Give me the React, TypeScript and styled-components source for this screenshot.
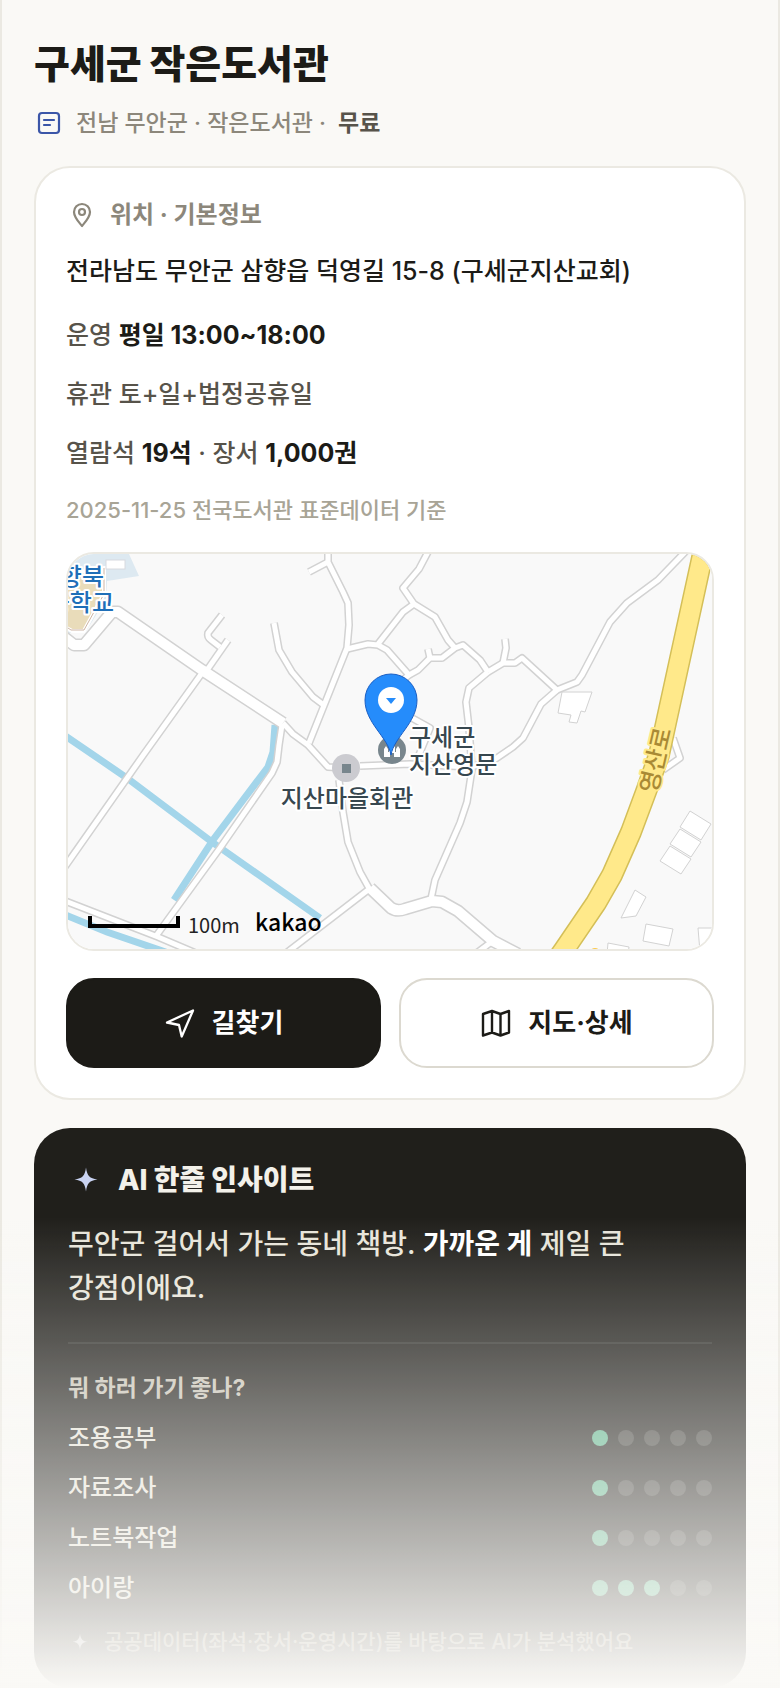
import React from "react"
import styled, { createGlobalStyle } from "styled-components"

const tokens = {
  font: `Inter, "Noto Sans CJK KR", sans-serif`,
  fontMap: `"Noto Sans CJK KR", sans-serif`,
  colors: {
    page: "#faf9f6",
    line: "#ebe9e2",
    lineStrong: "#dcd9d0",
    ink: "#1c1b17",
    text: "#57534a",
    muted: "#8c877b",
    faint: "#a8a496",
    dark: "#201f1b",
    mint: "#5cb38b",
    indigo: "#3b56a8",
  },
}

const GlobalStyle = createGlobalStyle`
  *, *::before, *::after {
    box-sizing: border-box;
  }

  body {
    margin: 0;
    background: ${tokens.colors.page};
    color: ${tokens.colors.ink};
    font-family: ${tokens.font};
    font-weight: 500;
    word-break: keep-all;
  }

  h1, h2, h3, p, ul {
    margin: 0;
    padding: 0;
  }

  svg {
    display: block;
    flex-shrink: 0;
  }
`

const Page = styled.main`
  min-height: 100vh;
  padding: 40px 32px 0;
  border: solid ${tokens.colors.line};
  border-width: 0 2px;
`

const Title = styled.h1`
  font-size: 39px;
  font-weight: 900;
  line-height: 48px;
`

const Meta = styled.p`
  display: flex;
  align-items: center;
  gap: 12px;
  margin-top: 16px;
  font-size: 23px;
  line-height: 38px;
  color: ${tokens.colors.muted};

  b {
    font-weight: 700;
    color: ${tokens.colors.text};
  }
`

const InfoCard = styled.section`
  margin-top: 24px;
  padding: 30px;
  background: #fff;
  border: 2px solid ${tokens.colors.line};
  border-radius: 36px;
`

const InfoHeading = styled.h2`
  display: flex;
  align-items: center;
  gap: 12px;
  font-size: 24px;
  font-weight: 700;
  line-height: 34px;
  color: ${tokens.colors.muted};
`

const Address = styled.p`
  margin-top: 20px;
  font-size: 25px;
  line-height: 38px;
`

const Facts = styled.ul`
  display: grid;
  gap: 21px;
  margin-top: 26px;
  list-style: none;
  font-size: 25px;
  line-height: 38px;
  color: ${tokens.colors.text};

  b {
    font-weight: 700;
    color: ${tokens.colors.ink};
  }
`

const Source = styled.p`
  margin-top: 20px;
  font-size: 22px;
  line-height: 36px;
  color: ${tokens.colors.faint};
`

const MapFrame = styled.div`
  margin-top: 24px;
  overflow: hidden;
  border: 2px solid ${tokens.colors.line};
  border-radius: 28px;

  svg {
    width: 100%;
    height: auto;
  }
`

const Actions = styled.div`
  display: grid;
  grid-template-columns: 1fr 1fr;
  gap: 18px;
  margin-top: 27px;
`

const ActionButton = styled.button<{ $primary?: boolean }>`
  display: flex;
  align-items: center;
  justify-content: center;
  gap: 16px;
  height: 90px;
  border: 2px solid
    ${props => (props.$primary ? tokens.colors.ink : tokens.colors.lineStrong)};
  border-radius: 28px;
  background: ${props => (props.$primary ? tokens.colors.ink : "#fff")};
  color: ${props => (props.$primary ? "#fff" : tokens.colors.ink)};
  font-family: inherit;
  font-size: 26px;
  font-weight: 700;
  line-height: 34px;
  cursor: pointer;
`

const InsightCard = styled.section`
  margin-top: 28px;
  padding: 34px 34px 30px;
  background: ${tokens.colors.dark};
  border-radius: 36px;
`

const InsightHeading = styled.h2`
  display: flex;
  align-items: center;
  gap: 14px;
  font-size: 28px;
  font-weight: 800;
  line-height: 36px;
  color: #f3f1ea;
`

const Summary = styled.p`
  margin-top: 24px;
  font-size: 28px;
  line-height: 44px;
  color: #e8e5da;

  b {
    font-weight: 700;
    color: #fff;
  }
`

const Purposes = styled.div`
  margin-top: 32px;
  padding-top: 28px;
  border-top: 2px solid rgba(255, 255, 255, 0.08);
`

const PurposesTitle = styled.h3`
  font-size: 23px;
  font-weight: 700;
  line-height: 32px;
  color: #c6c2b5;
`

const PurposeList = styled.ul`
  display: grid;
  gap: 16px;
  margin-top: 17px;
  list-style: none;
`

const Purpose = styled.li`
  display: flex;
  align-items: center;
  justify-content: space-between;
  font-size: 24px;
  line-height: 34px;
  color: #e6e3d8;
`

const Dots = styled.span`
  display: flex;
  gap: 10px;
`

const Dot = styled.span<{ $on: boolean }>`
  width: 16px;
  height: 16px;
  border-radius: 50%;
  background: ${props =>
    props.$on ? tokens.colors.mint : "rgba(255, 255, 255, 0.15)"};
`

const Footnote = styled.p`
  display: flex;
  align-items: center;
  gap: 12px;
  margin-top: 21px;
  font-size: 21px;
  line-height: 32px;
  color: #8f8a7c;
`

const Fade = styled.div`
  position: fixed;
  inset: auto 0 0;
  height: 28vh;
  background: linear-gradient(rgba(250, 249, 246, 0), ${tokens.colors.page});
  pointer-events: none;
`

const MapLabel = styled.text`
  font-family: ${tokens.fontMap};
  font-size: 24px;
  font-weight: 500;
  fill: #37474f;
  stroke: #fff;
  stroke-width: 4px;
  stroke-linejoin: round;
  paint-order: stroke;
`

const SchoolLabel = styled(MapLabel)`
  fill: #1f6fb8;
`

const RoadLabel = styled(MapLabel)`
  fill: #a98a35;
  stroke: #ffe98a;
`

const ScaleLabel = styled.text`
  font-family: ${tokens.fontMap};
  font-size: 20px;
  font-weight: 400;
  fill: #222;
`

const MapLogo = styled(ScaleLabel)`
  font-size: 23px;
  font-weight: 500;
  fill: #000;
`

const DocIcon = () => (
  <svg width="30" height="30" viewBox="0 0 30 30" fill="none" stroke={tokens.colors.indigo} strokeWidth="2.200" strokeLinecap="round">
    <rect x="5" y="5" width="20" height="20" rx="3" />
    <path d="M10 12h10M10 17h6" />
  </svg>
)

const PinIcon = () => (
  <svg width="32" height="32" viewBox="0 0 32 32" fill="none" stroke="currentColor" strokeWidth="2.200" strokeLinejoin="round">
    <path d="M16 27c-2.400-3-8-8.500-8-14a8 8 0 0 1 16 0c0 5.500-5.600 11-8 14z" />
    <circle cx="16" cy="13" r="3" />
  </svg>
)

const RouteIcon = () => (
  <svg width="32" height="32" viewBox="0 0 32 32" fill="none" stroke="currentColor" strokeWidth="2.300" strokeLinejoin="round">
    <path d="M3 15.500 29 3.500 17.700 29.500 15 18z" />
  </svg>
)

const MapIcon = () => (
  <svg width="32" height="32" viewBox="0 0 32 32" fill="none" stroke="currentColor" strokeWidth="2.400" strokeLinejoin="round">
    <path d="M3 7 12 4 20.500 7 29 4V25.500L20.500 28.500 12 25.500 3 28.500zM12 4v21.500M20.500 7v21.500" />
  </svg>
)

const SparkIcon = ({ size, color }: { size: number; color: string }) => (
  <svg width={size} height={size} viewBox="0 0 36 36" fill={color}>
    <path d="M18 5.500c1.200 8.600 3.400 10.800 11.500 12-8.100 1.200-10.300 3.400-11.500 12-1.200-8.600-3.400-10.800-11.500-12 8.100-1.200 10.300-3.400 11.500-12z" />
  </svg>
)

const lanes = [
  "M260-4V8L275 38 280 49 281 71 279 94 267 124 241 189",
  "M260 8 241 18",
  "M206 69 211 96 224 118 245 143 257 152",
  "M154 61 140 79Q139 83 143 86L152 93",
  "M160 86 137 119",
  "M134 119 76 200-4 314",
  "M214 171 211 191 209 208 204 219 152 294 88 382",
  "M-8 345 90 383 130 400",
  "M215 169 225 180 240 191 260 213 278 214",
  "M271 226 275 258 280 288 292 318 302 336",
  "M300 336 213 403",
  "M422 389 406 401",
  "M279 95 300 90 310 91 319 96 341 121 330 130",
  "M361-4 351 15 335 34 346 50 367 63 380 86 387 94",
  "M346 50 335 58 310 90",
  "M341 121 350 116 362 104H374L387 94 395 91 412 106 420 118",
  "M362 104 360 95",
  "M420 118 435 109H447L454 104 489 136 509 128 514 121 542 68 559 49 590 26 619-4",
  "M435 109 438 94 437 85",
  "M420 118 401 134 398 148 401 174 404 215 399 248 392 269 367 326 363 345",
  "M489 136 473 150 455 184 445 193 423 208 402 213",
  "M292 212 342 210 402 213",
  "M344 164 362 174 349 206",
  "M605 184 612 204 595 216",
]

const avenues = [
  "M-8 80 6 91H16L44 58H50L134 116 215 169",
  "M302 334 323 354Q329 358 337 355L364 347 374 348 390 357 425 387 450 400",
]

const canals = [
  "M-4 181 59 224 144 288 252 364",
  "M207 171 205 198 200 213 145 286 106 346",
  "M-5 360 39 378 112 403",
]

const buildings = [
  "494 138 524 138 517 158 513 157 509 169 501 168 503 161 490 159",
  "622 257 643 270 633 286 612 273",
  "612 275 633 288 623 303 602 290",
  "602 292 623 305 613 320 592 307",
  "567 336 578 343 568 362 553 364",
  "578 370 605 375 601 392 575 387",
  "630 374 646 374 646 398 632 398",
  "540 389 561 393 560 400 539 400",
]

const yellowRoad = "M637-10 591 201 579 235 563 278 544 321 528 349 496 396 484 413"

const LocationMap = () => (
  <svg viewBox="0 0 644 395" role="img" aria-label="구세군 작은도서관 위치">
    <rect width="644" height="395" fill="#f9f9f9" />

    <path d="M0 0H61L71 22 39 27 38 45 17 79H0z" fill="#dde9f1" />
    <path d="M-3 20 36 14 36 40 16 77 4 77-3 73z" fill="#e9dcba" stroke="#fff" strokeWidth="4" />
    <path d="M36 14V40L16 76H3L-3 72" fill="none" stroke="#cdb5a5" />
    <rect x="38" y="6" width="19" height="9" fill="#fff" stroke="#d8dadf" />

    <g fill="none" stroke="#a3d5ea" strokeWidth="7">
      {canals.map(d => <path key={d} d={d} />)}
    </g>

    <g fill="none" stroke="#d2d2d2" strokeLinejoin="round">
      {lanes.map(d => <path key={d} d={d} strokeWidth="8" />)}
      {avenues.map(d => <path key={d} d={d} strokeWidth="13" />)}
    </g>
    <g fill="none" stroke="#fff" strokeLinejoin="round">
      {lanes.map(d => <path key={d} d={d} strokeWidth="5" />)}
      {avenues.map(d => <path key={d} d={d} strokeWidth="10" />)}
    </g>

    <g fill="#fff" stroke="#d2d2d2">
      {buildings.map(points => <polygon key={points} points={points} />)}
    </g>

    <path d={yellowRoad} fill="none" stroke="#d4bf58" strokeWidth="22" strokeLinejoin="round" />
    <path d={yellowRoad} fill="none" stroke="#ffe98a" strokeWidth="19" strokeLinejoin="round" />
    <circle cx="527" cy="400" r="6" fill="#fbc94b" />

    <circle cx="278" cy="214" r="14" fill="#cbcbd0" />
    <rect x="274" y="210" width="9" height="9" fill="#78868d" />
    <circle cx="324" cy="196" r="14" fill="#78868d" />
    <path d="M316 203v-8l2-3 2 3v3h1v-5l3-3 3 3v5h1v-3l2-3 2 3v8h-6v-4h-4v4z" fill="#fff" />

    <path
      d="M323 201C320 183 297 169 297 146a26 26 0 0 1 52 0C349 169 326 183 323 201z"
      fill="#258cfb"
      stroke="#1b5fc4"
    />
    <circle cx="323" cy="146" r="13" fill="#fff" />
    <path d="M318 144h10l-5 6z" fill="#258cfb" />

    <SchoolLabel x="36" y="31" textAnchor="end">향북</SchoolLabel>
    <SchoolLabel x="46" y="57" textAnchor="end">등학교</SchoolLabel>
    <MapLabel x="341" y="192">구세군</MapLabel>
    <MapLabel x="341" y="219">지산영문</MapLabel>
    <MapLabel x="279" y="253" textAnchor="middle">지산마을회관</MapLabel>
    <RoadLabel transform="translate(596 208) rotate(-77)" textAnchor="middle">영산로</RoadLabel>

    <path d="M22 362V372H110V362" fill="none" stroke="#000" strokeWidth="4" />
    <ScaleLabel x="120" y="379">100m</ScaleLabel>
    <MapLogo x="187" y="377">kakao</MapLogo>
  </svg>
)

const purposes = [
  { label: "조용공부", score: 1 },
  { label: "자료조사", score: 1 },
  { label: "노트북작업", score: 1 },
  { label: "아이랑", score: 3 },
]

const App: React.FC = () => (
  <>
    <GlobalStyle />
    <Page>
      <Title>구세군 작은도서관</Title>
      <Meta>
        <DocIcon />
        <span>전남 무안군 · 작은도서관 ·</span>
        <b>무료</b>
      </Meta>

      <InfoCard>
        <InfoHeading>
          <PinIcon />
          위치 · 기본정보
        </InfoHeading>
        <Address>전라남도 무안군 삼향읍 덕영길 15-8 (구세군지산교회)</Address>
        <Facts>
          <li>운영 <b>평일 13:00~18:00</b></li>
          <li>휴관 토+일+법정공휴일</li>
          <li>열람석 <b>19석</b> · 장서 <b>1,000권</b></li>
        </Facts>
        <Source>2025-11-25 전국도서관 표준데이터 기준</Source>
        <MapFrame>
          <LocationMap />
        </MapFrame>
        <Actions>
          <ActionButton type="button" $primary>
            <RouteIcon />
            길찾기
          </ActionButton>
          <ActionButton type="button">
            <MapIcon />
            지도·상세
          </ActionButton>
        </Actions>
      </InfoCard>

      <InsightCard>
        <InsightHeading>
          <SparkIcon size={36} color="#c9d3f2" />
          AI 한줄 인사이트
        </InsightHeading>
        <Summary>
          무안군 걸어서 가는 동네 책방. <b>가까운 게</b> 제일 큰 강점이에요.
        </Summary>
        <Purposes>
          <PurposesTitle>뭐 하러 가기 좋나?</PurposesTitle>
          <PurposeList>
            {purposes.map(({ label, score }) => (
              <Purpose key={label}>
                {label}
                <Dots role="img" aria-label={`5점 중 ${score}점`}>
                  {[1, 2, 3, 4, 5].map(n => (
                    <Dot key={n} $on={n <= score} />
                  ))}
                </Dots>
              </Purpose>
            ))}
          </PurposeList>
        </Purposes>
        <Footnote>
          <SparkIcon size={24} color="#b3b4bc" />
          공공데이터(좌석·장서·운영시간)를 바탕으로 AI가 분석했어요
        </Footnote>
      </InsightCard>
    </Page>
    <Fade />
  </>
)

export default App
